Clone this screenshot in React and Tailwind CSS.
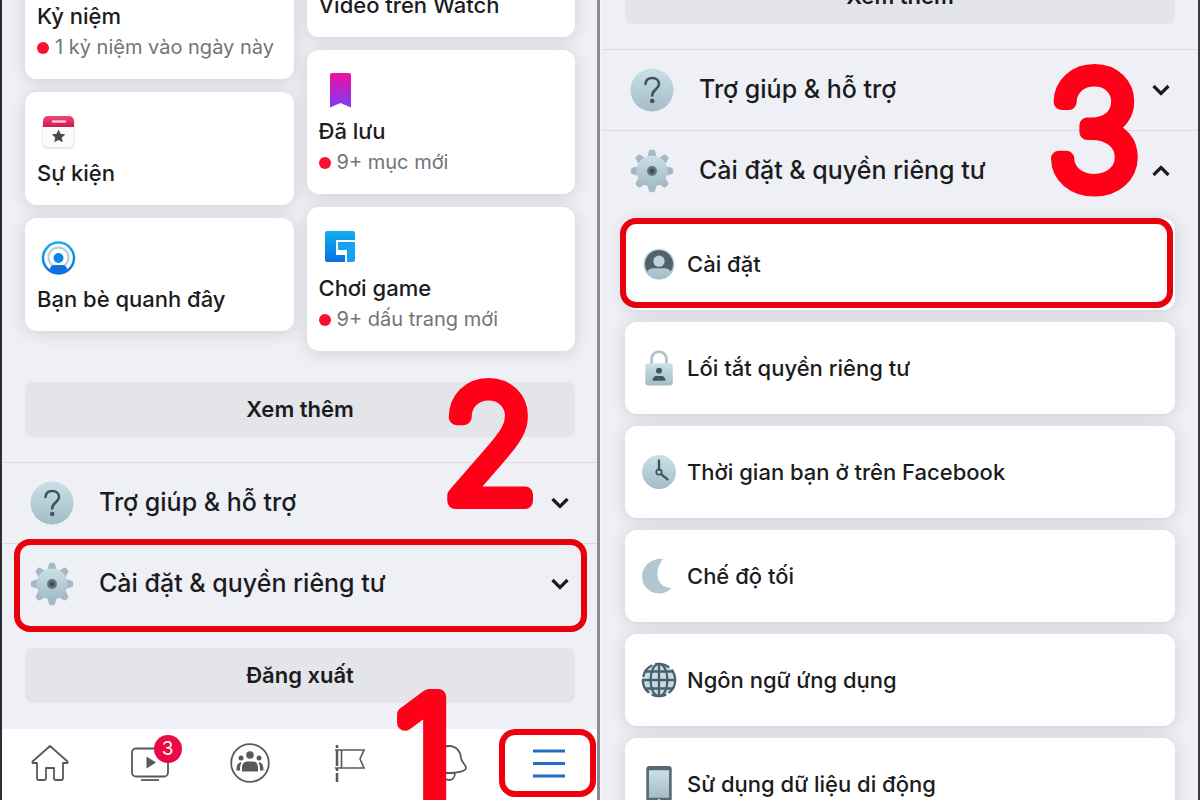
import { useState } from "react";

const IconDefs = () => (
  <svg className="absolute h-0 w-0" aria-hidden="true">
    <defs>
      <linearGradient id="steel" x1="0" y1="0" x2="0" y2="1">
        <stop offset="0" stopColor="#c9e1e6" />
        <stop offset="1" stopColor="#a3bcc6" />
      </linearGradient>
      <linearGradient id="saved" x1="0" y1="0" x2="0" y2="1">
        <stop offset="0" stopColor="#ee0f9f" />
        <stop offset="1" stopColor="#7b3df5" />
      </linearGradient>
      <linearGradient id="blue" x1="0" y1="0" x2="0" y2="1">
        <stop offset="0" stopColor="#12b0ee" />
        <stop offset="1" stopColor="#0a6fe0" />
      </linearGradient>
      <linearGradient id="event" x1="0" y1="0" x2="0" y2="1">
        <stop offset="0" stopColor="#f4447a" />
        <stop offset="1" stopColor="#c91c4c" />
      </linearGradient>
    </defs>
  </svg>
);

const CalendarIcon = () => (
  <svg viewBox="0 0 40 40" className="h-10 w-10">
    <rect x="3" y="5" width="33" height="32" rx="6" fill="#e9e9ec" />
    <rect x="4" y="5" width="31" height="30" rx="5" fill="#fbfbfc" />
    <path d="M4 15V9a5 5 0 0 1 5-5h21a5 5 0 0 1 5 5v6z" fill="url(#event)" />
    <path d="M14 9.500h12" stroke="#ffc3d4" strokeWidth="2.500" strokeLinecap="round" />
    <path d="m19.500 17.500 2 4.300 4.800.6-3.500 3.200.9 4.700-4.200-2.300-4.200 2.300.9-4.700-3.500-3.200 4.800-.6z" fill="#48484d" />
  </svg>
);

const NearbyIcon = () => (
  <svg viewBox="0 0 40 40" className="h-10 w-10">
    <circle cx="19.500" cy="20" r="15.500" fill="#fff" stroke="url(#blue)" strokeWidth="2.500" />
    <circle cx="19.500" cy="19.500" r="10" fill="none" stroke="#b9ccd8" strokeWidth="2" />
    <path d="M11 31.500c0-3.500 2.500-4.500 5-4.500h7c2.500 0 5 1 5 4.500-2.500 2.500-5.500 3.500-8.500 3.500s-6-1-8.500-3.500z" fill="#0c6fe0" />
    <circle cx="19.500" cy="20" r="5" fill="#0c86e8" />
  </svg>
);

const BookmarkIcon = () => (
  <svg viewBox="0 0 40 40" className="h-10 w-10">
    <path d="M9 5a2 2 0 0 1 2-2h17a2 2 0 0 1 2 2v32.500L19.500 33 9 37.500z" fill="url(#saved)" />
  </svg>
);

const GamingIcon = () => (
  <svg viewBox="0 0 40 40" className="h-10 w-10">
    <path d="M6 4h26a2 2 0 0 1 2 2v7H15v15h9v7H6a2 2 0 0 1-2-2V6a2 2 0 0 1 2-2z" fill="url(#blue)" />
    <path d="M17 15h17v18a2 2 0 0 1-2 2h-6V23h-9z" fill="#16a4ee" />
  </svg>
);

const HelpIcon = () => (
  <svg viewBox="0 0 44 44" className="h-11 w-11 shrink-0">
    <circle cx="22" cy="22" r="21.500" fill="url(#steel)" />
    <path d="M15.500 16c.3-4 3-6 6.700-6 4 0 6.800 2.300 6.800 6 0 5-6.800 5.500-6.800 11.500" fill="none" stroke="#42525e" strokeWidth="2.600" strokeLinecap="round" />
    <circle cx="22.200" cy="33" r="2.300" fill="#42525e" />
  </svg>
);

const GearIcon = () => (
  <svg viewBox="0 0 44 44" className="h-11 w-11 shrink-0">
    {[0, 45, 90, 135, 180, 225, 270, 315].map((angle) => (
      <path
        key={angle}
        d="M17 10l1.800-7.500a2 2 0 0 1 2-1.700h2.400a2 2 0 0 1 2 1.700L27 10z"
        fill="#a5b8c4"
        transform={`rotate(${angle} 22 22)`}
      />
    ))}
    <circle cx="22" cy="22" r="15.500" fill="url(#steel)" />
    <circle cx="22" cy="22" r="5" fill="#647480" />
    <circle cx="22" cy="22" r="2.500" fill="#3f4d59" />
  </svg>
);

const PersonIcon = () => (
  <svg viewBox="0 0 34 34" className="h-8 w-8">
    <circle cx="17" cy="17" r="16.500" fill="url(#steel)" />
    <path d="M17 2a15 15 0 0 0-12.500 23c1.500-2.500 4-3.500 7-3.500h11c3 0 5.500 1 7 3.500A15 15 0 0 0 17 2z" fill="#53616c" />
    <circle cx="17" cy="14" r="6" fill="#bdd3dc" />
  </svg>
);

const LockIcon = () => (
  <svg viewBox="0 0 34 34" className="h-9 w-9">
    <path d="M10 14V8.500a7 7 0 0 1 14 0V14" fill="none" stroke="#b4bfc6" strokeWidth="2.600" />
    <rect x="4" y="12.500" width="26" height="21" rx="3" fill="url(#steel)" />
    <circle cx="17" cy="19.500" r="2.800" fill="#43535f" />
    <path d="M11 29c0-3.500 2-4.500 4-4.500h4c2 0 4 1 4 4.500z" fill="#43535f" />
  </svg>
);

const ClockIcon = () => (
  <svg viewBox="0 0 34 34" className="h-9 w-9">
    <circle cx="17" cy="17" r="16" fill="url(#steel)" />
    <path d="M17 6v9M19 19l6 5" stroke="#42525e" strokeWidth="2.200" strokeLinecap="round" />
    <circle cx="17" cy="17" r="2.600" fill="none" stroke="#42525e" strokeWidth="1.600" />
  </svg>
);

const MoonIcon = () => (
  <svg viewBox="0 0 34 34" className="h-9 w-9">
    <path d="M21 .8C9 0 1 8 1 17.500 1 26.500 8 33.500 17 33.500c5 0 9-2 12-5.500-8 .5-13.500-5-13.500-12.500 0-6 2-10.500 5.500-14.700z" fill="#afc8d2" />
  </svg>
);

const GlobeIcon = () => (
  <svg viewBox="0 0 34 34" className="h-9 w-9">
    <circle cx="17" cy="17" r="15.500" fill="#c5dce4" />
    <g fill="none" stroke="#4e5f6c" strokeWidth="2.200">
      <circle cx="17" cy="17" r="15.300" strokeDasharray="14 3" />
      <ellipse cx="17" cy="17" rx="8" ry="15.300" />
      <path d="M17 1.500v31M1 17h32M3 9h28M3 25h28" />
    </g>
  </svg>
);

const PhoneIcon = () => (
  <svg viewBox="0 0 34 34" className="h-9 w-9">
    <rect x="5" y="0" width="24" height="34" rx="3" fill="#586874" />
    <rect x="7.500" y="4" width="19" height="26" fill="url(#steel)" />
    <circle cx="17" cy="32" r="1" fill="#dde8ec" />
  </svg>
);

const Chevron = ({ up }) => (
  <svg viewBox="0 0 20 20" className={up ? "h-5 w-5 rotate-180" : "h-5 w-5"}>
    <path d="M2.500 6l7.500 7.500L17.500 6" fill="none" stroke="#1c1c1e" strokeWidth="3.200" />
  </svg>
);

const HomeIcon = () => (
  <svg viewBox="0 0 40 40" className="h-10 w-10">
    <path d="M20 3 2.500 18.500V20H7v15.500a1.500 1.500 0 0 0 1.500 1.500h6a1.500 1.500 0 0 0 1.500-1.500V25h8v10.500a1.500 1.500 0 0 0 1.500 1.500h6a1.500 1.500 0 0 0 1.500-1.500V20h4.500v-1.500z" fill="none" stroke="#58595b" strokeWidth="1.800" strokeLinejoin="round" />
  </svg>
);

const WatchIcon = () => (
  <svg viewBox="0 0 40 40" className="h-10 w-10">
    <rect x="2" y="5.500" width="36" height="28" rx="4" fill="none" stroke="#58595b" strokeWidth="1.800" />
    <path d="M16.500 13.500v12l9.500-6z" fill="#58595b" />
    <path d="M11 37h18" stroke="#58595b" strokeWidth="1.800" />
  </svg>
);

const GroupsIcon = () => (
  <svg viewBox="0 0 40 40" className="h-10 w-10">
    <circle cx="20" cy="20" r="18.800" fill="none" stroke="#58595b" strokeWidth="1.800" />
    <g fill="#58595b">
      <circle cx="20" cy="12" r="3.800" />
      <circle cx="11" cy="15" r="2.500" />
      <circle cx="29" cy="15" r="2.500" />
      <path d="M12 28.500v-4c0-3.500 2-6 5-6h6c3 0 5 2.500 5 6v4z" />
      <path d="M6.500 27.500c0-4 .5-7 4-8.500l1 1c-1.500 2-1.500 4.500-1.500 7.500zM33.500 27.500c0-4-.5-7-4-8.500l-1 1c1.500 2 1.500 4.500 1.500 7.500z" />
    </g>
  </svg>
);

const FlagIcon = () => (
  <svg viewBox="0 0 40 40" className="h-10 w-10">
    <g fill="none" stroke="#58595b" strokeWidth="1.600">
      <path d="M8 2v37" strokeWidth="2.500" strokeDasharray="3 2 16 2" />
      <path d="M6 7h29l-4 9 4 9H6M12.500 7v18" />
    </g>
  </svg>
);

const BellIcon = () => (
  <svg viewBox="0 0 40 40" className="h-10 w-10">
    <path d="M20 3c-7 0-11.500 5-12 12-.4 5-5 6-5 10 0 3 8 5 17 5s17-2 17-5c0-4-4.600-5-5-10C31.500 8 27 3 20 3zM14 30c0 5 3 7 6 7s6-2 6-7" fill="none" stroke="#58595b" strokeWidth="1.800" />
  </svg>
);

const MenuIcon = () => (
  <svg viewBox="0 0 40 40" className="h-10 w-10">
    <path d="M4 8h32M4 20.500h32M4 33h32" stroke="#1f6fc6" strokeWidth="3" />
  </svg>
);

const shortcutsLeft = [
  { title: "Kỷ niệm", note: "1 kỷ niệm vào ngày này" },
  { title: "Sự kiện", icon: <CalendarIcon /> },
  { title: "Bạn bè quanh đây", icon: <NearbyIcon /> },
];

const shortcutsRight = [
  { title: "Video trên Watch" },
  { title: "Đã lưu", note: "9+ mục mới", icon: <BookmarkIcon /> },
  { title: "Chơi game", note: "9+ dấu trang mới", icon: <GamingIcon /> },
];

const settings = [
  { title: "Cài đặt", icon: <PersonIcon />, marked: true },
  { title: "Lối tắt quyền riêng tư", icon: <LockIcon /> },
  { title: "Thời gian bạn ở trên Facebook", icon: <ClockIcon /> },
  { title: "Chế độ tối", icon: <MoonIcon /> },
  { title: "Ngôn ngữ ứng dụng", icon: <GlobeIcon /> },
  { title: "Sử dụng dữ liệu di động", icon: <PhoneIcon /> },
];

const tabs = [
  { id: "home", label: "Home", icon: <HomeIcon /> },
  { id: "watch", label: "Watch", icon: <WatchIcon />, badge: 3 },
  { id: "groups", label: "Groups", icon: <GroupsIcon /> },
  { id: "pages", label: "Pages", icon: <FlagIcon /> },
  { id: "notifications", label: "Notifications", icon: <BellIcon /> },
  { id: "menu", label: "Menu", icon: <MenuIcon />, marked: true },
];

// Step number: a thin digit with a thick round stroke, so its ends are rounded
const StepNumber = ({ value, className }) => (
  <svg viewBox="0 0 120 150" className={`pointer-events-none absolute z-10 h-[150px] w-[120px] overflow-visible ${className}`}>
    <text
      x="60"
      y="132"
      textAnchor="middle"
      fill="#ff0019"
      stroke="#ff0019"
      strokeWidth="16"
      strokeLinejoin="round"
      fontSize="156"
      fontWeight="200"
      fontFamily="Inter, sans-serif"
    >
      {value}
    </text>
  </svg>
);

const ShortcutCard = ({ item }) => (
  <a href="#" className="block rounded-xl bg-white px-3 pt-5 pb-4 shadow-[0_2px_16px_rgba(60,65,80,0.18)]">
    <div className="ml-[2px] h-10">{item.icon}</div>
    <p className="mt-[6px] text-[22px] leading-[31px] font-medium">{item.title}</p>
    {item.note && (
      <p className="flex items-center gap-[6px] text-[20px] leading-[31px] text-[#737477]">
        <span className="h-3 w-3 rounded-full bg-[#f9102f]" />
        {item.note}
      </p>
    )}
  </a>
);

const GrayButton = ({ children }) => (
  <button type="button" className="block h-[55px] w-full rounded-lg bg-[#e4e5e9] text-[22px] font-semibold">
    {children}
  </button>
);

const MenuRow = ({ icon, title, open, onClick, marked }) => (
  <div className="relative border-t border-[#d9dbe0]">
    <button type="button" aria-expanded={open} onClick={onClick} className="flex h-20 w-full items-center pr-[27px] pl-7 text-left">
      {icon}
      <span className="ml-[25px] flex-1 text-[25px] font-medium">{title}</span>
      <Chevron up={open} />
    </button>
    {marked && <span className="pointer-events-none absolute -top-[5px] right-[10px] -bottom-2 left-3 rounded-2xl border-6 border-[#e8000d]" />}
  </div>
);

const MenuScreen = () => {
  const [active, setActive] = useState("menu");

  return (
    <section className="relative flex h-full min-w-0 flex-col overflow-hidden border-r-[3px] border-l-2 border-r-[#8b8c90] border-l-[#2e2e32] bg-[#eff0f5]">
      <div className="flex min-h-0 flex-1 flex-col justify-end">
        <div className="flex items-end gap-[13px] pr-[22px] pl-[23px]">
          <div className="flex flex-1 flex-col gap-[13px] pb-5">
            {shortcutsLeft.map((item) => (
              <ShortcutCard key={item.title} item={item} />
            ))}
          </div>
          <div className="flex flex-1 flex-col gap-[13px]">
            {shortcutsRight.map((item) => (
              <ShortcutCard key={item.title} item={item} />
            ))}
          </div>
        </div>
        <div className="pt-[31px] pr-[22px] pb-[25px] pl-[23px]">
          <GrayButton>Xem thêm</GrayButton>
        </div>
        <MenuRow icon={<HelpIcon />} title="Trợ giúp & hỗ trợ" />
        <MenuRow icon={<GearIcon />} title="Cài đặt & quyền riêng tư" marked />
        <div className="pt-6 pr-[22px] pb-[26px] pl-[23px]">
          <GrayButton>Đăng xuất</GrayButton>
        </div>
      </div>
      <nav className="-mx-[2px] grid h-[71px] shrink-0 grid-cols-6 bg-white pb-[3px]">
        {tabs.map((tab) => (
          <a
            key={tab.id}
            href={`#${tab.id}`}
            aria-label={tab.label}
            aria-current={active === tab.id ? "page" : undefined}
            onClick={() => setActive(tab.id)}
            className="relative flex items-center justify-center"
          >
            <span className="relative">
              {tab.icon}
              {tab.badge && (
                <span className="absolute -top-2 -right-3 flex h-7 w-7 items-center justify-center rounded-full bg-[#ea0a45] text-[19px] text-white">
                  {tab.badge}
                </span>
              )}
            </span>
            {tab.marked && <span className="pointer-events-none absolute top-0 right-[3px] bottom-0 left-0 rounded-2xl border-6 border-[#f0000f]" />}
          </a>
        ))}
      </nav>
      <StepNumber value="2" className="right-[47px] bottom-[281px]" />
      <StepNumber value="1" className="right-[112px] -bottom-[28px]" />
    </section>
  );
};

const SettingsScreen = () => {
  const [open, setOpen] = useState(true);

  return (
    <section className="relative h-full min-w-0 overflow-hidden border-r-2 border-l-2 border-r-[#3a3a3e] border-l-[#f4f4f8] bg-[#eff0f5]">
      <div className="-mt-[31px]">
        <div className="px-[23px] pb-[25px]">
          <GrayButton>Xem thêm</GrayButton>
        </div>
        <MenuRow icon={<HelpIcon />} title="Trợ giúp & hỗ trợ" />
        <MenuRow icon={<GearIcon />} title="Cài đặt & quyền riêng tư" open={open} onClick={() => setOpen(!open)} />
        {open && (
          <div className="flex flex-col gap-3 px-[23px] pt-[7px]">
            {settings.map((item) => (
              <a
                key={item.title}
                href="#"
                className="relative flex h-[92px] items-center gap-[10px] rounded-xl bg-white pl-4 text-[22px] font-medium shadow-[0_2px_16px_rgba(60,65,80,0.18)]"
              >
                <span className="flex w-9 justify-center">{item.icon}</span>
                {item.title}
                {item.marked && <span className="pointer-events-none absolute top-0 right-[2px] bottom-[2px] -left-[5px] rounded-2xl border-6 border-[#e8000d]" />}
              </a>
            ))}
          </div>
        )}
      </div>
      <StepNumber value="3" className="top-[55px] right-[44px]" />
    </section>
  );
};

export default function App() {
  return (
    <main className="grid h-screen grid-cols-2 overflow-hidden font-[Inter,'Noto_Sans',sans-serif] text-[#1c1c1e]">
      <IconDefs />
      <MenuScreen />
      <SettingsScreen />
    </main>
  );
}
